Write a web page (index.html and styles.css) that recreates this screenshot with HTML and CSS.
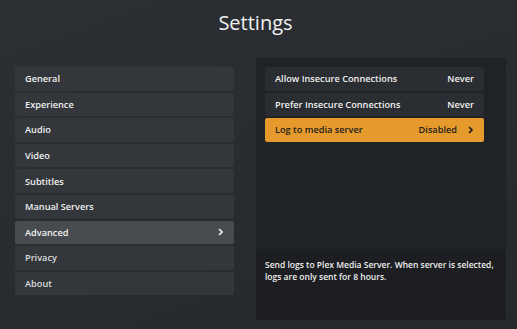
FILE: index.html
```html
<!DOCTYPE html>
<html lang="en">
<head>
    <meta charset="UTF-8">
    <meta name="viewport" content="width=device-width, initial-scale=1.0">
    <title>Settings</title>
    <link rel="stylesheet" href="styles.css">
</head>
<body>
    <h1 class="title">Settings</h1>
    <div class="settings">
        <ul class="menu">
            <li class="menu-item">General</li>
            <li class="menu-item">Experience</li>
            <li class="menu-item">Audio</li>
            <li class="menu-item">Video</li>
            <li class="menu-item">Subtitles</li>
            <li class="menu-item">Manual Servers</li>
            <li class="menu-item selected">Advanced
                <svg class="chevron" viewBox="0 0 5 8"><path d="M1 1l3 3-3 3"/></svg>
            </li>
            <li class="menu-item dim">Privacy</li>
            <li class="menu-item dim">About</li>
        </ul>
        <div class="panel">
            <ul class="options">
                <li class="option"><span>Allow Insecure Connections</span><span class="value">Never</span></li>
                <li class="option"><span>Prefer Insecure Connections</span><span class="value">Never</span></li>
                <li class="option focused"><span>Log to media server</span>
                    <span class="value">Disabled
                        <svg class="chevron" viewBox="0 0 5 8"><path d="M1 1l3 3-3 3"/></svg>
                    </span>
                </li>
            </ul>
            <div class="description">
                Send logs to Plex Media Server. When server is selected,<br>
                logs are only sent for 8 hours.
            </div>
        </div>
    </div>
</body>
</html>
```

FILE: styles.css
```css
body {
    margin: 0;
    height: 329px;
    overflow: hidden;
    font-family: "Open Sans", "Noto Sans", sans-serif;
    color: #f0f0f0;
    background: linear-gradient(160deg, #2c3034 0%, #25282c 100%);
}

.title {
    margin: 0;
    height: 57.7px;
    padding: 9px 6px 0 0;
    box-sizing: border-box;
    text-align: center;
    font-size: 20px;
    font-weight: 400;
    color: #f2f2f2;
}

.settings {
    display: flex;
    padding-left: 15px;
    gap: 22px;
}

ul {
    list-style: none;
    margin: 0;
    padding: 0;
}

.menu {
    width: 219px;
    padding-top: 9.3px;
    display: flex;
    flex-direction: column;
    gap: 2px;
}

.menu-item,
.option {
    height: 23.6px;
    display: flex;
    align-items: center;
    justify-content: space-between;
    padding: 0 10px;
    font-size: 9.2px;
    font-weight: 600;
    border-radius: 2px;
    background: #33373b;
}

.menu-item.selected {
    background: #474b4f;
}

.menu-item.dim {
    color: #dcdcdc;
}

.chevron {
    width: 5px;
    height: 8px;
    fill: none;
    stroke: currentColor;
    stroke-width: 1.6;
    margin-right: 1px;
}

.panel {
    width: 249.7px;
    height: 262.3px;
    background: #202326;
    display: flex;
    flex-direction: column;
    justify-content: space-between;
}

.options {
    width: 219px;
    padding: 9.3px 0 0 9px;
    display: flex;
    flex-direction: column;
    gap: 2px;
}

.option {
    background: #2a2d31;
}

.option.focused {
    background: #e59a2b;
    color: #1e1e1e;
}

.value {
    display: flex;
    align-items: center;
    gap: 11px;
}

.description {
    height: 70px;
    box-sizing: border-box;
    padding: 9px 9px;
    background: #1c1e21;
    font-size: 8.5px;
    font-weight: 600;
    line-height: 12px;
    white-space: nowrap;
    overflow: hidden;
}
```
